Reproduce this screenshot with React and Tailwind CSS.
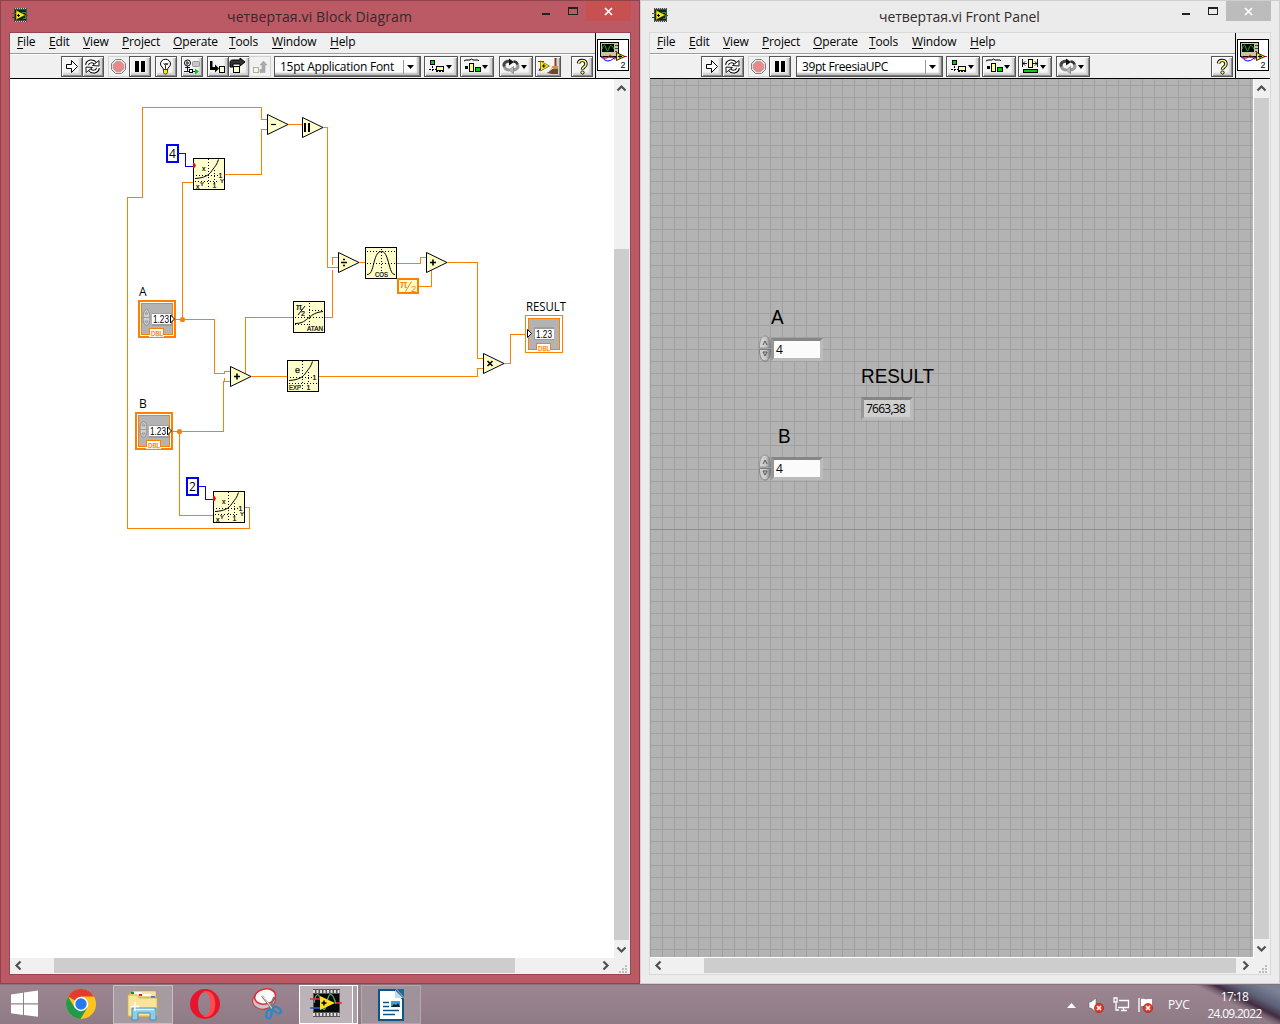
import React from "react";

const UI = "font-['Open_Sans',sans-serif]";
const OR = "#ff8000";
const CREAM = "#ffffcc";

/* ---------- window icons ---------- */
function ChipIcon({ className, width = 16, height = 14 }) {
  return (
    <svg className={className} width={width} height={height} viewBox="0 0 16 14" shapeRendering="crispEdges">
      <rect x="2" y="0" width="13" height="14" fill="#4a4a4a" />
      <path d="M3 .5h12M3 13.500h12" stroke="#c8c8c8" strokeDasharray="1 1" />
      <rect x="3" y="2" width="11" height="10" fill="#0c2a12" />
      <path d="M10 4h3v2M11 10h2v-2" stroke="#2d9140" fill="none" />
      <path d="M0 5.500h5M13 7.500h3" stroke="#f01020" />
      <path d="M0 9.500h5" stroke="#1020f0" />
      <path d="M4 2.500v9l9-4.500z" fill="#ffe600" stroke="#a08a00" strokeWidth=".6" />
      <path d="M5 7.500h3M6.500 6v3" stroke="#000" />
    </svg>
  );
}

function ConnectorIcon() {
  return (
    <svg width="32" height="32" viewBox="0 0 32 32" className="block">
      <g shapeRendering="crispEdges">
        <rect x=".5" y=".5" width="31" height="31" fill="#fff" stroke="#000" />
        <rect x="3.500" y="3.500" width="18" height="14" fill="#c8c8a0" stroke="#000" />
        <rect x="5" y="5" width="12" height="8" fill="#000" />
        <path d="M18 6h3M18 9h3M18 12h2" stroke="#444" />
        <path d="M4 18.500h18" stroke="#77775a" />
      </g>
      <path d="M5 10c2-5 3-5 4-1s2 4 3 0 3-3 5 1" fill="none" stroke="#22c032" />
      <path d="M5 17c2 3 4 4 6 1s3-2 5 1 3-1 6-1M22 17.500h8" fill="none" stroke="#f00" />
      <path d="M4 17c2 2 3 5 7 5s5-3 8-4" fill="none" stroke="#00f" />
      <path d="M19.500 13.500v8l8.500-4z" fill="#ffe600" stroke="#000" strokeWidth=".8" />
      <path d="M21 17.500h4M23 15.500v4" stroke="#000" />
      <text x="23.500" y="28.500" fontSize="9" fontFamily="Liberation Sans, sans-serif">2</text>
    </svg>
  );
}

/* ---------- toolbar glyphs ---------- */
const Glyph = ({ w = 19, children }) => (
  <svg width={w} height="19" viewBox={"0 0 " + w + " 19"} className="block shrink-0">{children}</svg>
);
const Caret = ({ x }) => <path d={"M" + x + " 8h6l-3 4z"} fill="#000" />;

const RunGlyph = () => (
  <Glyph><path d="M4.500 7.500h5v-4l6 6-6 6v-4h-5z" fill="#fff" stroke="#000" /></Glyph>
);
const LoopGlyph = () => (
  <Glyph>
    <g fill="none">
      <path d="M4 8c.5-4 6-5 8.500-1.500M15 11c-.5 4-6 5-8.500 1.500" stroke="#000" strokeWidth="3.800" />
      <path d="M4 8.500c.5-4.500 6-5.500 8.500-2M15 10.500c-.5 4.500-6 5.500-8.500 2" stroke="#fff" strokeWidth="1.800" />
    </g>
    <path d="M9.500 8.500l6.500.500V3.500z" fill="#fff" stroke="#000" strokeWidth=".9" />
    <path d="M9.500 10.500L3 10v5.500z" fill="#fff" stroke="#000" strokeWidth=".9" />
  </Glyph>
);
const StopGlyph = () => (
  <Glyph>
    <path d="M6.500 2.500h6l4 4v6l-4 4h-6l-4-4v-6z" fill="#e8e8e8" stroke="#808080" />
    <path d="M7.300 4.500h4.400l3 3v4.200l-3 3H7.300l-3-3V7.500z" fill="#ee8888" stroke="#999" strokeWidth=".7" />
  </Glyph>
);
const PauseGlyph = () => <Glyph><path d="M5 4h4v11H5zM11 4h4v11h-4z" fill="#000" /></Glyph>;
const BulbGlyph = () => (
  <Glyph>
    <path d="M7.500 13c0-3-3-3-3-6a5 4.800 0 0 1 10 0c0 3-3 3-3 6z" fill="#fff" stroke="#000" />
    <path d="M7.500 6l1.500 2 1-2 1 2 1-2M9.500 8v4" stroke="#000" fill="none" strokeWidth=".8" />
    <path d="M7.500 12.500h4v3l-1 1.500h-2l-1-1.500z" fill="#ffe600" stroke="#222" strokeWidth=".8" />
  </Glyph>
);
const RetainGlyph = () => (
  <Glyph>
    <circle cx="5.500" cy="6" r="3" fill="#fff" stroke="#000" />
    <path d="M4.800 4.500v3l2-1.500zM5.500 9v5M3 10.500h5" stroke="#000" fill="none" strokeWidth=".9" />
    <rect x="10.500" y="4.500" width="7" height="5" rx="1" fill="#c8c8c8" stroke="#999" />
    <path d="M2 14.500h6M11 14.500h3" stroke="#00f" />
    <rect x="7.500" y="12.500" width="3" height="3" fill="#fff" stroke="#000" />
    <path d="M13 11.500v6l4-3z" fill="#00c020" />
  </Glyph>
);
const StepInGlyph = () => (
  <Glyph>
    <path d="M2 4h2.500v6H7V7.500l4 4-4 4V13H2z" fill="#000" />
    <rect x="11.500" y="9.500" width="5" height="6" fill={CREAM} stroke="#000" />
  </Glyph>
);
const StepOverGlyph = () => (
  <Glyph>
    <path d="M1 10V5.500C1 4 2 3 3.500 3H11V1l5 4-5 4V7H4v3z" fill="#333" stroke="#000" />
    <rect x="4.500" y="9.500" width="6" height="6" fill={CREAM} stroke="#000" />
  </Glyph>
);
const StepOutGlyph = () => (
  <Glyph>
    <rect x="3.500" y="10.500" width="5" height="5" fill="#fbf8d6" stroke="#b0b0a0" />
    <path d="M10 15.500h5V8h2l-3.500-4L10 8h2v4.500h-2z" fill="#aaa" stroke="#999" strokeWidth=".5" />
  </Glyph>
);
const AlignGlyph = () => (
  <Glyph w={32}>
    <rect x="5.500" y="3.500" width="4" height="4" fill="#00d000" stroke="#000" />
    <path d="M7.500 9v5M4 12.500h7M11 14.500h9" stroke="#000" fill="none" strokeDasharray="2 1" />
    <rect x="11.500" y="9.500" width="7" height="4" fill="#ffff99" stroke="#000" />
    <Caret x={21} />
  </Glyph>
);
const DistGlyph = () => (
  <Glyph w={32}>
    <path d="M3 4l2-1h4l1.500-1L12 3h5l1 1" stroke="#000" fill="none" />
    <rect x="4" y="9" width="3" height="3" fill="#000" />
    <rect x="8.500" y="6.500" width="4" height="8" fill="#ffff99" stroke="#000" />
    <rect x="14.500" y="10.500" width="5" height="4" fill="#00d000" stroke="#000" />
    <Caret x={21} />
  </Glyph>
);
const ResizeGlyph = () => (
  <Glyph w={32}>
    <path d="M3.500 2v8M18.500 2v8M4 6.500h4M14 6.500h4M6 4.500l-2 2 2 2M16 4.500l2 2-2 2" stroke="#000" fill="none" strokeWidth=".9" />
    <rect x="9.500" y="2.500" width="4" height="8" fill="#ffff99" stroke="#000" />
    <rect x="4.500" y="12.500" width="14" height="3" fill="#00d000" stroke="#000" />
    <Caret x={21} />
  </Glyph>
);
const ReorderGlyph = () => (
  <Glyph w={32}>
    <path d="M4.500 10C2.500 5.500 7 3.500 10.500 4.500" stroke="#444" strokeWidth="3" fill="none" />
    <path d="M9 1.500l5 3.500-5 3.500z" fill="#111" />
    <path d="M4.500 9.500c.5 3 2.500 3.500 5 3.500" stroke="#999" strokeWidth="3" fill="none" />
    <path d="M17 7c2.500 3.500-.5 6-4 6" stroke="#999" strokeWidth="3" fill="none" />
    <path d="M13.500 4.500c2 0 3.500 1 4 3" stroke="#333" strokeWidth="2.500" fill="none" />
    <path d="M13.500 9.500l-4.500 3.500 4.500 3.500z" fill="#bbb" stroke="#666" strokeWidth=".6" />
    <Caret x={21} />
  </Glyph>
);
const CleanGlyph = () => (
  <Glyph w={24}>
    <path d="M2 4.500h6M3 12.500h4" stroke="#f00" />
    <path d="M3 14l2-4" stroke="#00f" />
    <path d="M4.500 4v10l9-5z" fill="#ffe600" stroke="#443d00" strokeWidth=".6" />
    <path d="M6 9h3.500M7.800 7.200v3.500" stroke="#000" />
    <path d="M19.500 1v9" stroke="#8b3a1a" strokeWidth="2" />
    <path d="M16 9h6v4h-7z" fill="#d09050" />
    <path d="M15 12h7v5h-6l-5-1z" fill="#6b4a30" />
    <path d="M12 15l5-4" stroke="#eec" />
  </Glyph>
);
const HelpGlyph = () => (
  <Glyph w={20}>
    <path d="M6.500 6.500c.5-4.500 7.500-4 7.500.5 0 3-3.500 3-3.500 5.500" fill="none" stroke="#000" strokeWidth="3.400" />
    <path d="M6.500 6.500c.5-4 7.500-4 7.500.5 0 3-3.500 3-3.500 5" fill="none" stroke="#ffff88" strokeWidth="1.600" />
    <circle cx="10.500" cy="15.500" r="1.600" fill="#ffff88" stroke="#000" strokeWidth=".9" />
  </Glyph>
);

function Btn({ className, flat, children }) {
  const skin = flat
    ? "border-[#d2d2d2] bg-[#f1f1f1]"
    : "border-[#555] bg-[#f4f4f4] shadow-[inset_1px_1px_0_#fff,inset_-1px_-1px_0_#8c8c8c,inset_-3px_-3px_2px_#cfcfcf]";
  return (
    <div className={"flex h-[21px] shrink-0 items-center overflow-hidden border " + skin + " " + className}>
      {children}
    </div>
  );
}

function FontBox({ label, tracking }) {
  return (
    <div className="ml-[3px] flex h-[21px] w-[147px] shrink-0 items-center border border-[#555] bg-white shadow-[inset_-1px_-1px_0_#777,inset_-3px_-3px_2px_#bbb]">
      <span className={"w-[128px] whitespace-nowrap pl-[5px] text-[12px] leading-[18px] " + tracking}>{label}</span>
      <span className="h-[14px] w-px bg-[#999]" />
      <svg width="14" height="19" viewBox="0 0 14 19"><path d="M3 8h7l-3.500 4z" /></svg>
    </div>
  );
}

const MENU = [
  ["File", "w-[32px]"],
  ["Edit", "w-[34px]"],
  ["View", "w-[39px]"],
  ["Project", "w-[51px]"],
  ["Operate", "w-[56px]"],
  ["Tools", "w-[43px]"],
  ["Window", "w-[58px]"],
  ["Help", "w-[40px]"],
];

function Chevron({ d }) {
  return (
    <svg width="15" height="15" viewBox="0 0 15 15" className="shrink-0">
      <path d={d} fill="none" stroke="#505050" strokeWidth="2.200" />
    </svg>
  );
}

function LabWindow({ title, titlePad, active, toolbar, children, vThumb, hThumb }) {
  const frame = active ? "bg-[#bb5964] border-[#8f434c]" : "bg-[#ebebeb] border-[#cfcfcf]";
  const inner = active ? "border-[#99454f]" : "border-[#d9d9d9]";
  return (
    <section className={"flex h-[984px] w-[640px] flex-col border " + frame}>
      <header className="flex h-[31px] shrink-0 items-start">
        <ChipIcon className="ml-[11px] mt-[7px] shrink-0" />
        <h1 className={"w-[502px] whitespace-nowrap pt-[5px] text-[14px] leading-[22px] text-[#332a2c] " + titlePad}>{title}</h1>
        <div className="flex w-[101px] shrink-0">
          <svg width="56" height="20" viewBox="0 0 56 20" shapeRendering="crispEdges" className="shrink-0">
            <rect x="12" y="12" width="8" height="2" fill="#222" />
            <path d="M38.500 6v7.500h9V6" fill="none" stroke="#222" />
            <rect x="38" y="6" width="10" height="2" fill="#222" />
          </svg>
          <div className={"flex h-5 w-[45px] shrink-0 items-center justify-center " + (active ? "bg-[#c75050]" : "bg-[#bcbcbc]")}>
            <svg width="9" height="9" viewBox="0 0 9 9"><path d="M1 1l7 7M8 1L1 8" stroke="#fff" strokeWidth="1.700" /></svg>
          </div>
        </div>
      </header>
      <div className={"ml-[8px] flex h-[943px] w-[622px] flex-col border bg-[#f0f0f0] " + inner}>
        <div className="flex h-[46px] shrink-0 border-b border-black">
          <div className="flex w-[585px] flex-col">
            <nav className="flex h-[20px] pl-[7px] text-[12px] leading-[18px] text-black">
              {MENU.map(([m, w]) => (
                <span key={m} className={"shrink-0 tracking-[-0.15px] " + w}>
                  <span className="underline underline-offset-2">{m[0]}</span>{m.slice(1)}
                </span>
              ))}
            </nav>
            <div className="flex h-[25px] border-t border-[#9c9c9c] pl-[51px] pt-[2px] shadow-[inset_0_1px_0_#fff]">{toolbar}</div>
          </div>
          <div className="w-[35px] border-l border-black pl-px pt-[6px]"><ConnectorIcon /></div>
        </div>
        <div className="flex h-[879px] shrink-0">
          <div className={"h-full shrink-0 " + (active ? "w-[604px] bg-white" : "w-[604px] border-b border-r border-white")}>{children}</div>
          <div className="flex w-[16px] flex-col bg-[#f0f0f0]">
            <div className="flex h-[19px] items-center"><Chevron d="M3.500 9.500l4-4 4 4" /></div>
            <div className={"w-[15px] bg-[#cdcdcd] " + vThumb} />
            <div className="mt-[2px]"><Chevron d="M3.500 5.500l4 4 4-4" /></div>
          </div>
        </div>
        <div className="flex h-[16px] shrink-0 items-start">
          <Chevron d="M10.500 3.500l-4 4 4 4" />
          <div className="flex w-[574px]"><div className={"h-[15px] bg-[#cdcdcd] " + hThumb} /></div>
          <Chevron d="M4.500 3.500l4 4-4 4" />
          <svg width="16" height="15" viewBox="0 0 16 15" fill="#bdbdbd">
            <path d="M11 7h2v2h-2zM11 10h2v2h-2zM11 13h2v2h-2zM8 10h2v2H8zM8 13h2v2H8zM5 13h2v2H5z" />
          </svg>
        </div>
      </div>
    </section>
  );
}

/* ---------- block diagram ---------- */
const WIRES = [
  "M267 119.500H261.500V107.500H142.500V197.500H127.500V528.500H249.500V507.500H245",
  "M288 124.500H302",
  "M323 127.500H327.500V267.500H338",
  "M338 257.500H332.500V265M332.500 270V317.500H325",
  "M225 174.500H261.500V129.500H267",
  "M193 182.500H182.500V319.500",
  "M176 319.500H214.500V373.500H224.500V371.500H230",
  "M173 431.500H223.500V381.500H230M224.500 381V378",
  "M179.500 431V515.500H213",
  "M251 376.500H287",
  "M245.500 375V317.500H293",
  "M319 376.500H477.500V368.500H483",
  "M359 262.500H365",
  "M397 263.500H420.500V257.500H426",
  "M419 286.500H431.500V270",
  "M447 262.500H477.500V358.500H483",
  "M504 363.500H510.500V334.500H526",
];

function Tri({ x, y, sym, weight = 1.6 }) {
  return (
    <g transform={"translate(" + x + " " + y + ")"}>
      <path d="M.5.5v20l20.500-10z" fill={CREAM} stroke="#000" />
      <path d={sym} stroke="#000" strokeWidth={weight} fill="none" />
    </g>
  );
}

function FnBox({ x, y, children }) {
  return (
    <g transform={"translate(" + x + " " + y + ")"} stroke="#000" fill="none">
      <rect x=".5" y=".5" width="31" height="31" fill={CREAM} shapeRendering="crispEdges" />
      {children}
    </g>
  );
}
const Tiny = ({ x, y, s = 7, w, children }) => (
  <text x={x} y={y} fontSize={s} textLength={w} lengthAdjust="spacingAndGlyphs" fill="#000" stroke="#000" strokeWidth=".2" fontFamily="Liberation Sans, sans-serif">{children}</text>
);

function PowBox({ x, y }) {
  return (
    <FnBox x={x} y={y}>
      <path d="M15.500 1v28M2 23.500h24M3 17.500h24M21.500 12v14" strokeDasharray="1 2" />
      <path d="M2 20.500c9-.5 14-3 17-8 3-4 5-6 6.500-11" />
      <Tiny x="9" y="13">x</Tiny>
      <Tiny x="25.500" y="19.500">1</Tiny>
      <Tiny x="19.500" y="30">1</Tiny>
      <Tiny x="3" y="31">x</Tiny>
      <Tiny x="7" y="28" s="6">Y</Tiny>
      <Tiny x="27" y="25" s="6">Y</Tiny>
      <path d="M0 5h1.500l1.500 2.500L1.500 10H0z" fill="#f00" stroke="none" />
    </FnBox>
  );
}

function Terminal({ x, y, output }) {
  return (
    <g transform={"translate(" + x + " " + y + ")"}>
      <g shapeRendering="crispEdges">
        {output
          ? <rect x=".5" y=".5" width="37" height="37" fill="#fff" stroke={OR} />
          : <rect x="1" y="1" width="36" height="36" fill="#fff" stroke={OR} strokeWidth="2" />}
        <rect x="3.500" y="3.500" width="31" height="31" fill="#b3b3b3" stroke={OR} />
        <rect x={output ? 9 : 14} y={output ? 12 : 13} width="20" height="13" fill="#8e8e8e" opacity=".6" />
        <rect x={output ? 10 : 14} y="14" width="19" height="10" fill="#fff" />
        <path d="M11 28h15v9H11z" fill="#fff" />
        <path d="M11.500 35v-6.500h14V35" fill="none" stroke={OR} />
        {output && <path d="M11 37.500h15" stroke={OR} />}
      </g>
      {output
        ? <path d="M2.500 14.500v8l4-4z" fill="#fff" stroke="#000" />
        : <>
            <ellipse cx="8.500" cy="17.500" rx="3.500" ry="8" fill="#cfcfcf" stroke="#858585" strokeWidth=".8" />
            <path d="M5 17.500h7M7 14l1.500-2.500L10 14zM7 21l1.500 2.500L10 21z" stroke="#888" strokeWidth=".7" fill="none" />
            <path d="M32.500 15v8l4-4z" fill="#fff" stroke="#000" />
          </>}
      <text x={output ? 11 : 15} y="22.500" fontSize="10" textLength="16" lengthAdjust="spacingAndGlyphs" fontFamily="Liberation Sans, sans-serif">1.23</text>
      <text x="13" y="36" fontSize="7.200" textLength="12" lengthAdjust="spacingAndGlyphs" fill={OR} stroke={OR} strokeWidth=".25" fontFamily="Liberation Sans, sans-serif">DBL</text>
    </g>
  );
}

function Const({ x, y, v }) {
  return (
    <g>
      <rect x={x + 1} y={y + 1} width="11" height="17" fill="#fff" stroke="#0000ff" strokeWidth="2" shapeRendering="crispEdges" />
      <text x={x + 3} y={y + 14} fontSize="12" fontFamily="Open Sans, sans-serif">{v}</text>
    </g>
  );
}

function Diagram() {
  return (
    <svg width="604" height="879" viewBox="10 79 604 879" className="block">
      <g fill="none" stroke={OR} shapeRendering="crispEdges">
        {WIRES.map((d) => <path key={d} d={d} />)}
      </g>
      <g fill="none" stroke="#0000ff" shapeRendering="crispEdges">
        <path d="M179 153.500H185.500V166.500H193M199 486.500H205.500V499.500H213" />
      </g>
      <circle cx="182.500" cy="319.500" r="2.600" fill={OR} />
      <circle cx="179.500" cy="431.500" r="2.600" fill={OR} />
      <Tri x={267} y={114} sym="M4 10.500h5" weight="1.200" />
      <Tri x={302} y={117} sym="M3 6v9M7 6v9" weight="2" />
      <Tri x={338} y={252} sym="M3 10.500h6M5 7.500h2M5 13.500h2" />
      <Tri x={426} y={252} sym="M4 10.500h6M7 7.500v6" />
      <Tri x={230} y={366} sym="M4 10.500h6M7 7.500v6" />
      <Tri x={483} y={353} sym="M4.500 8l5 5M9.500 8l-5 5" />
      <PowBox x={193} y={158} />
      <PowBox x={213} y={491} />
      <FnBox x={365} y={247}>
        <path d="M16.500 2v23M2 4.500h28M2 16.500h28" strokeDasharray="1 2" />
        <path d="M2 27.500c4 0 5-4 7-12s4-11 7.500-11 5 4 7 11 3 12 6.500 12" />
        <Tiny x="10" y="30" w="13">COS</Tiny>
      </FnBox>
      <FnBox x={293} y={301}>
        <path d="M16.500 2v22M2 16.500h28M16 9.500h14M2 23.500h13" strokeDasharray="1 2" />
        <path d="M2 22.500c8 0 10-3 14-6s6-5 14-6M5 14l7-9" />
        <Tiny x="3" y="9" s="9">π</Tiny>
        <Tiny x="8" y="15">2</Tiny>
        <Tiny x="14" y="30" w="16">ATAN</Tiny>
      </FnBox>
      <FnBox x={287} y={360}>
        <path d="M15.500 1v28M2 23.500h28M3 17.500h23M21.500 12v12" strokeDasharray="1 2" />
        <path d="M2 20.500c9-.5 14-3 17-8 3-4 5-6 6.500-11" />
        <Tiny x="8" y="13" s="9">e</Tiny>
        <Tiny x="25.500" y="20">1</Tiny>
        <Tiny x="2" y="30" w="12">EXP</Tiny>
        <Tiny x="19.500" y="30">1</Tiny>
      </FnBox>
      <rect x="398" y="279" width="20" height="14" fill={CREAM} stroke={OR} strokeWidth="2" shapeRendering="crispEdges" />
      <g fill={OR} fontFamily="Liberation Sans, sans-serif">
        <text x="400" y="288" fontSize="11" stroke={OR} strokeWidth=".2">π</text>
        <path d="M405.500 291.500l6-10" stroke={OR} />
        <text x="411" y="291.500" fontSize="9.500">2</text>
      </g>
      <Const x={166} y={144} v="4" />
      <Const x={186} y={477} v="2" />
      <Terminal x={138} y={300} />
      <Terminal x={135} y={412} />
      <Terminal x={525} y={315} output />
      <g fontSize="12" fontFamily="Open Sans, sans-serif">
        <text x="139" y="296">A</text>
        <text x="139" y="408">B</text>
        <text x="526" y="311" textLength="40" lengthAdjust="spacingAndGlyphs">RESULT</text>
      </g>
    </svg>
  );
}

/* ---------- front panel ---------- */
function Spinner() {
  return (
    <svg width="14" height="28" viewBox="0 0 14 28" className="shrink-0">
      <defs>
        <linearGradient id="knob" x1="0" x2="1">
          <stop offset="0" stopColor="#d8d8d8" /><stop offset=".6" stopColor="#c6c6c6" /><stop offset="1" stopColor="#777" />
        </linearGradient>
      </defs>
      <path d="M1.500 13C1.500 5 3.500 1 7 1s5.500 4 5.500 12z" fill="url(#knob)" stroke="#858585" strokeWidth=".8" />
      <path d="M1.500 14.500C1.500 22 3.500 26 7 26s5.500-4 5.500-11.500z" fill="url(#knob)" stroke="#707070" strokeWidth=".8" />
      <path d="M5 10l2-4 2 4M5 17h4l-2 4z" fill="none" stroke="#555" />
    </svg>
  );
}

function Field({ value, readOnly }) {
  return (
    <div className={"h-[23px] w-[52px] border-[3px] border-b-[#bbb] border-l-[#969696] border-r-[#bbb] border-t-[#868686] pl-[2px] text-[12px] leading-[17px] text-black " + (readOnly ? "bg-[#cfcfcf] tracking-[-0.75px]" : "bg-[#fbfbfb]")}>
      {value}
    </div>
  );
}

const CAPTION = "absolute origin-left scale-x-[0.9] font-['Liberation_Sans',sans-serif] text-[21px] leading-6 text-black";

function Panel() {
  return (
    <div className="relative h-full w-full bg-[#b3b3b3] bg-[linear-gradient(to_right,#a0a0a0_1px,transparent_1px),linear-gradient(to_bottom,#a0a0a0_1px,transparent_1px)] bg-[size:12px_12px] bg-[position:0_6px]">
      <div className="absolute left-0 top-[450px] h-px w-full bg-[#8c8c8c]" />
      <div className={CAPTION + " left-[121px] top-[226px]"}>A</div>
      <div className="absolute left-[108px] top-[256px] flex items-center">
        <Spinner /><div className="-ml-px"><Field value="4" /></div>
      </div>
      <div className={CAPTION + " left-[211px] top-[285px]"}>RESULT</div>
      <div className="absolute left-[211px] top-[318px]"><Field value="7663,38" readOnly /></div>
      <div className={CAPTION + " left-[128px] top-[345px]"}>B</div>
      <div className="absolute left-[108px] top-[375px] flex items-center">
        <Spinner /><div className="-ml-px"><Field value="4" /></div>
      </div>
    </div>
  );
}

/* ---------- taskbar ---------- */
function ErrorBadge() {
  return (
    <g>
      <circle cx="11" cy="11" r="4.600" fill="#e03a2a" stroke="#b01808" strokeWidth=".6" />
      <path d="M9 9l4 4M13 9l-4 4" stroke="#fff" strokeWidth="1.600" />
    </g>
  );
}

function Taskbar() {
  return (
    <footer className="flex h-10 w-full overflow-hidden border-t border-[#85727c] bg-gradient-to-b from-[#9b8590] to-[#8f7b86] text-white">
      <svg className="ml-[11px] mt-[5px] shrink-0" width="29" height="28" viewBox="0 0 29 28" fill="#fff">
        <path d="M0 4.500l12-1.700v10.400H0zM13 2.600L27 .5v12.700H13zM0 14.500h12v10.400L0 23.300zM13 14.500h14v12.300L13 25z" />
      </svg>
      <svg className="ml-[26px] mt-[4px] shrink-0" width="30" height="30" viewBox="0 0 30 30">
        <circle cx="15" cy="15" r="15" fill="#ffc51c" />
        <path d="M15 15L2 7.500A15 15 0 0 1 28 7.500H15z" fill="#e33b2e" />
        <path d="M2 7.500A15 15 0 0 0 14.500 30L21.500 18.500 15 15l-6.500 3.500z" fill="#229a4b" />
        <circle cx="15" cy="15" r="7.200" fill="#fff" />
        <circle cx="15" cy="15" r="5.700" fill="#267af0" />
      </svg>
      <div className="ml-[17px] h-[39px] w-[60px] shrink-0 border border-[#c9bcc4] bg-[#a79ba2] pl-[12px] pt-[4px]">
        <svg width="34" height="32" viewBox="0 0 34 32">
          <path d="M3 3h9l2 3h15v21H3z" fill="#eccb66" stroke="#bf9b3c" strokeWidth=".7" />
          <path d="M7 1h23v6H7z" fill="#f7e3a4" stroke="#bf9b3c" strokeWidth=".5" />
          <path d="M5 2h3v2H5z" fill="#0a9a24" /><path d="M8 2h8v2H8zM15 4h10v2H15z" fill="#fff" /><path d="M13 4h3v2h-3z" fill="#e02020" /><path d="M25 6h4v2h-4z" fill="#3880d0" />
          <path d="M2 5h9l2 3h18v18H2z" fill="#fae39a" stroke="#d0ae50" strokeWidth=".7" />
          <path d="M6 18h24v12h-6v-7H12v7H6z" fill="#8dcdec" stroke="#3b8ab8" strokeWidth=".9" />
          <path d="M8 19.500h20" stroke="#e3f6ff" strokeWidth="1.500" />
          <path d="M9 12v9M4.500 16.500h9" stroke="#fff" strokeWidth="1.300" />
        </svg>
      </div>
      <svg className="ml-[17px] mt-[4px] shrink-0" width="30" height="30" viewBox="0 0 30 30">
        <path fillRule="evenodd" d="M15 0a15 15 0 1 0 0 30 15 15 0 0 0 0-30zm0 3c4 0 6 5 6 12s-2 12-6 12S8 22 8 15 11 3 15 3z" fill="#e8132d" />
        <path d="M11 4c3-3 9-3 12 2 3 4 3 14 0 18-3 5-9 5-12 2 3 2 6 1 8-3 2-5 2-11 0-16-2-4-5-5-8-3z" fill="#ff4b4b" />
      </svg>
      <svg className="ml-[32px] mt-[3px] shrink-0" width="31" height="33" viewBox="0 0 31 33">
        <ellipse cx="12" cy="12" rx="11.500" ry="9" fill="#cbc4ca" stroke="#c8303c" transform="rotate(-12 12 12)" />
        <ellipse cx="13" cy="8.500" rx="10.500" ry="7.500" fill="#fafafa" stroke="#e02a34" strokeWidth="1.500" transform="rotate(-12 13 8)" />
        <path d="M10 8l11 14M22 9l-5 14" stroke="#777" strokeWidth="2" />
        <path d="M10.500 8l10 13" stroke="#eee" />
        <ellipse cx="17" cy="26" rx="2.500" ry="4.500" fill="none" stroke="#2c87c8" strokeWidth="2.200" transform="rotate(8 17 26)" />
        <ellipse cx="25" cy="22" rx="2.500" ry="4.500" fill="none" stroke="#2c87c8" strokeWidth="2.200" transform="rotate(-55 25 22)" />
      </svg>
      <div className="ml-[16px] flex h-[39px] w-[60px] shrink-0">
        <div className="w-[54px] border border-white bg-[#bcb2b8] pl-[10px] pt-[2px]">
          <svg width="32" height="30" viewBox="0 0 32 30">
            <rect x="3" y="1" width="27" height="28" fill="#555" />
            <path d="M3 3.500h27M3 26.500h27" stroke="#ddd" strokeWidth="3" strokeDasharray="2 1.500" />
            <rect x="4" y="6" width="25" height="18" fill="#080808" />
            <path d="M4 15c2-11 5-11 7-1s4 10 6 0 5-11 9 2" stroke="#4fae70" fill="none" strokeWidth="1.300" />
            <path d="M0 11h10M26 15h6" stroke="#f02a30" strokeWidth="1.600" />
            <path d="M0 20h10" stroke="#2d5cc8" strokeWidth="1.600" />
            <path d="M10 8v14l15-7z" fill="#ffe020" />
            <path d="M11.500 15h5M14 12.500v5" stroke="#000" strokeWidth="1.600" />
          </svg>
        </div>
        <div className="w-[5px] border border-l-0 border-white bg-[#aaa0a6]" />
      </div>
      <div className="ml-[2px] h-[39px] w-[60px] shrink-0 border border-[#b4a8af] bg-[#a0929a] pl-[16px] pt-[3px]">
        <svg width="27" height="32" viewBox="0 0 27 32">
          <path d="M1 1h16l8 9v21H1z" fill="#fff" stroke="#0b5688" strokeWidth="2" />
          <path d="M19 0h7v8z" fill="#17689c" /><path d="M17 1v8h8z" fill="#bddcf0" />
          <path d="M5 13.500h6M5 17.500h6M5 21.500h16M5 25.500h12" stroke="#0b5688" strokeWidth="1.600" />
          <rect x="13" y="12" width="9" height="6" fill="#3b9fd8" /><path d="M13 18l3-3 2 1 2-2 2 4z" fill="#123" />
        </svg>
      </div>
      <div className="ml-auto flex shrink-0">
        <svg className="mr-[12px] mt-[18px]" width="9" height="5" viewBox="0 0 9 5"><path d="M0 5h9L4.500 0z" fill="#fff" /></svg>
        <svg className="mr-[9px] mt-[12px]" width="16" height="17" viewBox="0 0 16 17">
          <path d="M1 5h2l5-4v14l-5-4H1z" fill="#fff" stroke="#555" strokeWidth=".5" /><ErrorBadge />
        </svg>
        <svg className="mr-[7px] mt-[12px]" width="17" height="17" viewBox="0 0 17 17" fill="none" stroke="#fff" strokeWidth="1.300">
          <path d="M6 3.500h9.500v7H5M8 13.500h6M10.500 11v2M3 6v7h3M1 1h3v4H1z" />
        </svg>
        <svg className="mr-[14px] mt-[12px]" width="17" height="17" viewBox="0 0 17 17">
          <path d="M2 1v14" stroke="#fff" strokeWidth="1.300" /><path d="M4 2c3-1 4 1 7 0h4v7H4z" fill="#fff" /><ErrorBadge />
        </svg>
        <span className="w-[25px] pt-[10px] text-[12px] leading-5 tracking-[-0.25px]">РУС</span>
        <div className="flex w-[87px] flex-col items-center bg-[linear-gradient(27deg,transparent_48%,#75626f_54%,#412b42_60%,#5d6078_72%,#7a8294_90%)] pr-[4px] pt-[3px] text-[12px] leading-[17px]">
          <span className="tracking-[-0.6px]">17:18</span>
          <span className="tracking-[-0.7px]">24.09.2022</span>
        </div>
      </div>
    </footer>
  );
}

export default function App() {
  const head = (
    <>
      <Btn className="w-[22px]"><RunGlyph /></Btn>
      <Btn className="-ml-px w-[22px]"><LoopGlyph /></Btn>
      <Btn flat className="ml-1 w-[22px]"><StopGlyph /></Btn>
      <Btn className="-ml-px w-[22px]"><PauseGlyph /></Btn>
    </>
  );
  return (
    <main className={"flex h-[1024px] w-[1280px] flex-col overflow-hidden antialiased " + UI}>
      <div className="flex">
        <LabWindow
          active
          title="четвертая.vi Block Diagram"
          titlePad="pl-[199px] tracking-[0.13px]"
          vThumb="mt-[151px] h-[691px]"
          hThumb="ml-[29px] w-[461px]"
          toolbar={
            <>
              {head}
              <Btn className="ml-1 w-[22px]"><BulbGlyph /></Btn>
              <Btn className="ml-1 w-[22px]"><RetainGlyph /></Btn>
              <Btn className="ml-1 w-[22px]"><StepInGlyph /></Btn>
              <Btn className="-ml-px w-[22px]"><StepOverGlyph /></Btn>
              <Btn flat className="-ml-px w-[22px]"><StepOutGlyph /></Btn>
              <FontBox label="15pt Application Font" tracking="tracking-[-0.25px]" />
              <Btn className="ml-[3px] w-[34px]"><AlignGlyph /></Btn>
              <Btn className="ml-[2px] w-[34px]"><DistGlyph /></Btn>
              <Btn className="ml-[5px] w-[34px]"><ReorderGlyph /></Btn>
              <Btn className="ml-[2px] w-[26px]"><CleanGlyph /></Btn>
              <Btn className="ml-[10px] w-[22px]"><HelpGlyph /></Btn>
            </>
          }
        >
          <Diagram />
        </LabWindow>
        <LabWindow
          title="четвертая.vi Front Panel"
          titlePad="pl-[211px] tracking-[-0.06px]"
          vThumb="h-[841px]"
          hThumb="ml-[39px] w-[532px]"
          toolbar={
            <>
              {head}
              <div className="ml-[2px]"><FontBox label="39pt FreesiaUPC" tracking="tracking-[-0.4px]" /></div>
              <Btn className="ml-[3px] w-[34px]"><AlignGlyph /></Btn>
              <Btn className="ml-[2px] w-[34px]"><DistGlyph /></Btn>
              <Btn className="ml-[2px] w-[34px]"><ResizeGlyph /></Btn>
              <Btn className="ml-[4px] w-[34px]"><ReorderGlyph /></Btn>
              <Btn className="ml-auto mr-[2px] w-[22px]"><HelpGlyph /></Btn>
            </>
          }
        >
          <Panel />
        </LabWindow>
      </div>
      <Taskbar />
    </main>
  );
}
